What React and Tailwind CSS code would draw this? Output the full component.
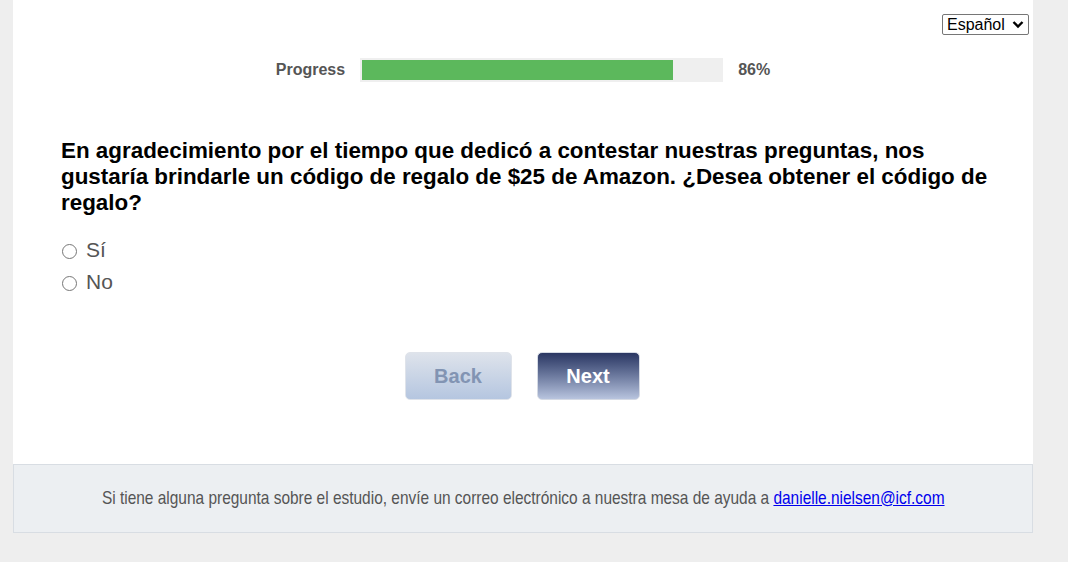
import { useState } from 'react'

const options = ['Sí', 'No']

export default function App() {
  const [choice, setChoice] = useState(null)
  const progress = 86

  return (
    <div className="min-h-[562px] bg-[#eeeeee] font-['Liberation_Sans',Arial,sans-serif]">
      <div className="ml-[13px] w-[1020px]">
        {/* Survey panel */}
        <div className="bg-white h-[464px] flex flex-col">
          <div className="flex justify-end pt-[14px] pr-[4px]">
            <div className="relative flex">
              <select className="appearance-none h-[21px] w-[87px] border border-[#767676] rounded-[2px] text-[16px] leading-[18px] text-black pl-[4px] bg-white">
                <option>Español</option>
              </select>
              <svg className="pointer-events-none absolute right-[5px] top-[6px]" width="12" height="9" viewBox="0 0 12 9">
                <path d="M1.5 2 L6 6.5 L10.5 2" fill="none" stroke="#000" strokeWidth="2.4" />
              </svg>
            </div>
          </div>

          <div className="flex items-center justify-center gap-[15px] mt-[23px]">
            <span className="text-[16px] font-bold text-[#555555]">Progress</span>
            <div className="w-[363px] h-[24px] bg-[#efefef] p-[2px] pr-0">
              <div className="h-full bg-[#5cb85c]" style={{ width: `${progress}%` }} />
            </div>
            <span className="text-[16px] font-bold text-[#555555]">{progress}%</span>
          </div>

          <div className="pl-[48px] pr-[30px] mt-[56px]">
            <h1 className="text-[22.4px] leading-[26px] font-bold text-black">
              En agradecimiento por el tiempo que dedicó a contestar nuestras preguntas, nos gustaría brindarle un código de regalo de $25 de Amazon. ¿Desea obtener el código de regalo?
            </h1>
            <div className="mt-[22px] flex flex-col gap-[8px]">
              {options.map((o) => (
                <label key={o} className="flex items-center gap-[9px] text-[21px] leading-[24px] text-[#555555] cursor-pointer">
                  <input
                    type="radio"
                    name="gift"
                    checked={choice === o}
                    onChange={() => setChoice(o)}
                    className="w-[15px] h-[15px] ml-[1px] mt-[2px] accent-[#555555]"
                  />
                  {o}
                </label>
              ))}
            </div>
          </div>

          <div className="flex justify-center gap-[25px] mt-[58px] pl-[2px] pr-[4px]">
            <button className="w-[107px] h-[48px] rounded-[5px] border border-[#dfe3ea] bg-gradient-to-b from-[#dee3eb] to-[#b5c6e0] text-[20px] font-bold text-[#8294b3]">
              Back
            </button>
            <button className="w-[103px] h-[48px] rounded-[5px] border border-[#d5dae4] bg-gradient-to-b from-[#2b3763] to-[#b8c4de] text-[20px] font-bold text-white">
              Next
            </button>
          </div>
        </div>

        {/* Footer */}
        <div className="h-[69px] bg-[#eceff2] border border-[#d8dde3] flex items-center justify-center overflow-hidden">
          <p className="whitespace-nowrap scale-x-[0.813] text-[19px] text-[#555555] pb-[1px]">
            Si tiene alguna pregunta sobre el estudio, envíe un correo electrónico a nuestra mesa de ayuda a{' '}
            <a href="mailto:danielle.nielsen@icf.com" className="text-[#0000ee] underline">danielle.nielsen@icf.com</a>
          </p>
        </div>
      </div>
    </div>
  )
}
